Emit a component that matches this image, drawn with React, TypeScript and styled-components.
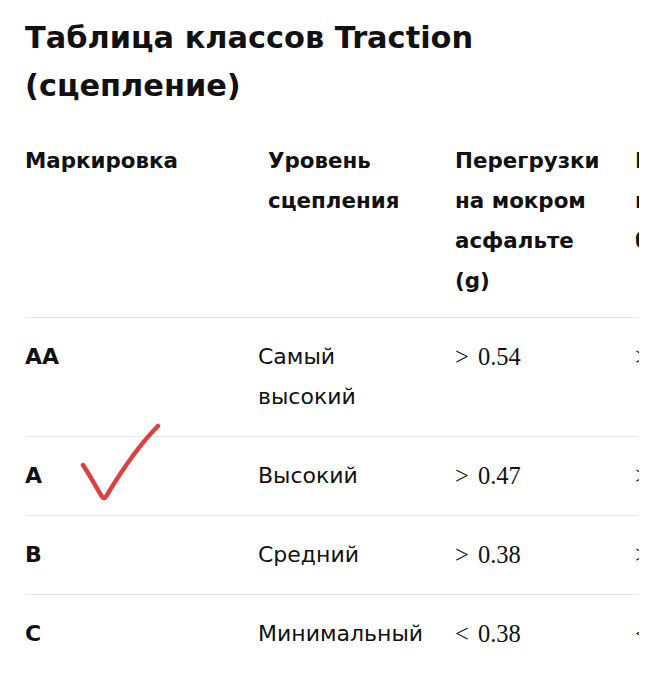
import React from "react";
import styled, { createGlobalStyle } from "styled-components";

const GlobalStyle = createGlobalStyle`
  html, body {
    margin: 0;
    padding: 0;
    background: #fff;
  }
  body {
    font-family: "DejaVu Sans", "Liberation Sans", sans-serif;
    color: #111;
  }
`;

const Page = styled.div`
  position: relative;
  width: 664px;
  height: 699px;
  overflow: hidden;
  padding-left: 25px;
  box-sizing: border-box;
`;

const Title = styled.h2`
  margin: 14px 0 0;
  font-size: 30.4px;
  line-height: 48px;
  font-weight: 700;
  color: #111;
`;

const TableScroll = styled.div`
  width: 614px;
  margin-top: 10px;
  overflow: hidden;
`;

const Table = styled.table`
  width: 800px;
  table-layout: fixed;
  border-collapse: collapse;
`;

const HeadCell = styled.th<{ $indent?: number }>`
  padding: 21px 30px 16px ${(p) => p.$indent ?? 0}px;
  text-align: left;
  vertical-align: top;
  font-size: 21.4px;
  line-height: 40px;
  font-weight: 700;
`;

const BodyRow = styled.tr`
  border-top: 1px solid #e6e6e6;
`;

const Cell = styled.td<{ $bold?: boolean }>`
  padding: 19px 30px 19px 0;
  vertical-align: top;
  font-size: 22px;
  line-height: 40px;
  font-weight: ${(p) => (p.$bold ? 700 : 400)};
`;

const ValueCell = styled(Cell)`
  font-family: "Liberation Serif", "Times New Roman", serif;
  font-size: 24.5px;
  word-spacing: 3px;
`;

const CheckMark = styled.svg`
  position: absolute;
  left: 80px;
  top: 422px;
  width: 84px;
  height: 82px;
  pointer-events: none;
`;

const rows = [
  { mark: "AA", level: "Самый высокий", asphalt: "> 0.54", concrete: "> 0.41" },
  { mark: "A", level: "Высокий", asphalt: "> 0.47", concrete: "> 0.35" },
  { mark: "B", level: "Средний", asphalt: "> 0.38", concrete: "> 0.26" },
  { mark: "C", level: "Минимальный", asphalt: "< 0.38", concrete: "< 0.26" },
];

export default function App() {
  return (
    <Page>
      <GlobalStyle />
      <Title>Таблица классов Traction (сцепление)</Title>
      <TableScroll>
        <Table>
          <colgroup>
            <col style={{ width: 233 }} />
            <col style={{ width: 197 }} />
            <col style={{ width: 180 }} />
            <col style={{ width: 190 }} />
          </colgroup>
          <thead>
            <tr>
              <HeadCell>Маркировка</HeadCell>
              <HeadCell $indent={10}>Уровень сцепления</HeadCell>
              <HeadCell>Перегрузки на мокром асфальте (g)</HeadCell>
              <HeadCell>Перегрузки на мокром бетоне (g)</HeadCell>
            </tr>
          </thead>
          <tbody>
            {rows.map((r) => (
              <BodyRow key={r.mark}>
                <Cell $bold>{r.mark}</Cell>
                <Cell>{r.level}</Cell>
                <ValueCell>{r.asphalt}</ValueCell>
                <ValueCell>{r.concrete}</ValueCell>
              </BodyRow>
            ))}
          </tbody>
        </Table>
      </TableScroll>
      <CheckMark viewBox="0 0 84 82">
        <path
          d="M3 43 C9 52 15 63 21 73 C23 77 25 77 27 73 C42 48 58 24 78 4"
          fill="none"
          stroke="#d9423f"
          strokeWidth="4.5"
          strokeLinecap="round"
          strokeLinejoin="round"
        />
      </CheckMark>
    </Page>
  );
}
